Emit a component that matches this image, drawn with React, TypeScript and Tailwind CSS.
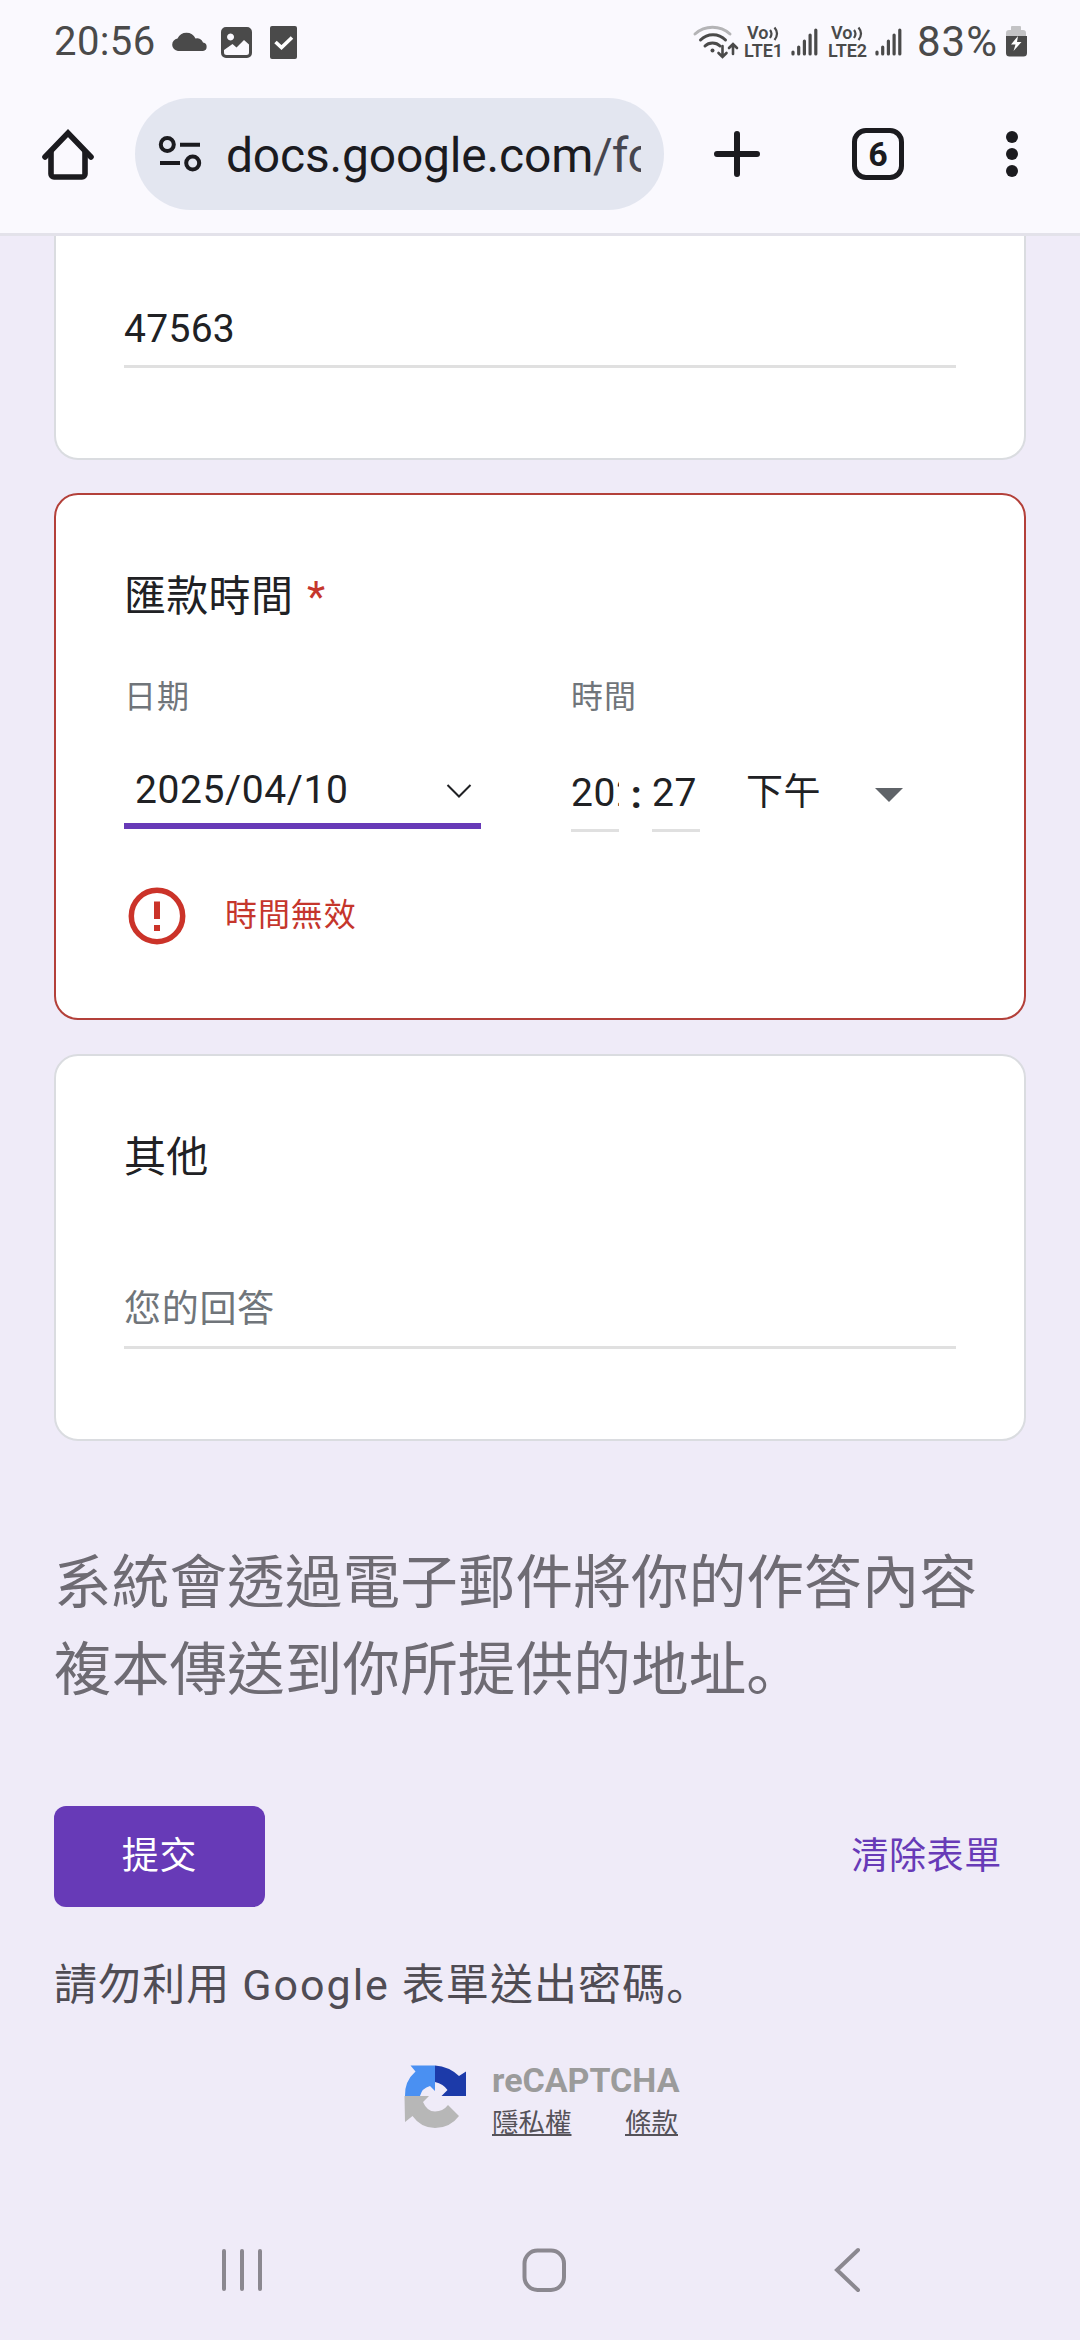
import type { ReactNode } from "react";

const cjk = "font-['Roboto','Noto_Sans_CJK_TC',sans-serif]";

function StatusBar() {
  return (
    <div className="flex h-[84px] items-center justify-between pl-[54px] pr-[53px] text-[#4a4a4a]">
      <div className="flex items-center">
        <span className="w-[118px] text-[40px] leading-none tracking-[0.4px]">20:56</span>
        <svg className="h-[34px] w-[126px]" viewBox="172 25 126 34" fill="#4a4a4a">
          <path d="M178 51a6.300 6.300 0 0 1-.5-12.500A10 10 0 0 1 195.500 38.500a6 6 0 0 1 7.500 4A4.300 4.300 0 0 1 203 51z" />
          <path
            fillRule="evenodd"
            d="M226 27h21a5 5 0 0 1 5 5v21a5 5 0 0 1-5 5h-21a5 5 0 0 1-5-5v-21a5 5 0 0 1 5-5zM230.500 33.500a3.500 3.500 0 1 0 .1 0zM224 50v2.500a2.500 2.500 0 0 0 2.500 2.500h20a2.500 2.500 0 0 0 2.500-2.500v-8l-5-4.500-7.500 7.500-4-3.500z"
          />
          <rect x="270" y="26" width="27" height="33" rx="2" />
          <path d="M275.500 42l6 5.500 10.500-10" fill="none" stroke="#fff" strokeWidth="3.600" />
        </svg>
      </div>
      <div className="flex items-center">
        <svg className="h-[34px] w-[48px]" viewBox="692 26 48 34" fill="none" stroke="#4a4a4a" strokeWidth="3" strokeLinecap="round">
          <path d="M695 35c10-9 25-9 35 0" stroke="#b4b4b6" />
          <path d="M700.500 41c7-7 18-7 25 0M705 47c4-4 11-4 15 0" />
          <circle cx="712.500" cy="51.500" r="2" fill="#4a4a4a" stroke="none" />
          <path d="M722.500 47v10M718.500 54l4 4 4-4M733 55V46M729 49l4-4 4 4" strokeWidth="2.600" />
        </svg>
        <LteBadge label="LTE1" />
        <Signal />
        <span className="w-[5px]" />
        <LteBadge label="LTE2" />
        <Signal />
        <span className="ml-[14px] w-[85px] whitespace-nowrap text-[42px] leading-none tracking-[1px]">83%</span>
        <svg className="ml-[3px] h-[34px] w-[22px]" viewBox="1005 26 22 34">
          <path d="M1006 38v-4a3 3 0 0 1 3-3h2v-3a1 1 0 0 1 1-1h8a1 1 0 0 1 1 1v3h2a3 3 0 0 1 3 3v4z" fill="#c3c3c5" />
          <path d="M1006 37h21v17a3.500 3.500 0 0 1-3.500 3.500h-14a3.500 3.500 0 0 1-3.500-3.500z" fill="#4a4a4a" />
          <path d="M1018 37l-7 8.500h4.500l-2 6.500 8-9h-4.500z" fill="#fff" />
        </svg>
      </div>
    </div>
  );
}

function LteBadge({ label }: { label: string }) {
  return (
    <div className="ml-[4px] flex w-[46px] flex-col whitespace-nowrap text-[18px] font-semibold leading-[18px]">
      <span className="flex items-center pl-[3px]">
        Vo
        <svg className="ml-px h-[15px] w-[10px]" viewBox="0 0 10 15" fill="none" stroke="#4a4a4a" strokeWidth="2.200">
          <path d="M1 4q3 3.500 0 8M5.500 1.500q5 6 0 12.500" />
        </svg>
      </span>
      <span>{label}</span>
    </div>
  );
}

function Signal() {
  return (
    <svg className="h-[30px] w-[29px]" viewBox="0 0 29 30" stroke="#4a4a4a" strokeWidth="3.200" strokeLinecap="round">
      <path d="M3 25v2M8.700 20v7M14.400 14v13M20.100 8v19M25.800 3v24" />
    </svg>
  );
}

function BrowserBar() {
  return (
    <div className="flex h-[152px] items-start border-b-[3px] border-[#e3e2ea] pt-[14px] text-[#1b1b1f]">
      <svg className="ml-[40px] mt-[28px] h-[56px] w-[56px]" viewBox="40 126 56 56" fill="none" stroke="#1b1b1f" strokeWidth="5.600" strokeLinecap="round">
        <path d="M45 157l23-24 23 24" strokeLinejoin="miter" />
        <path d="M51 152v22a3 3 0 0 0 3 3h28a3 3 0 0 0 3-3v-22" />
      </svg>
      <div className="ml-[39px] flex h-[112px] w-[529px] items-center rounded-full bg-[#e3e6f0] pl-[23px] pr-[23px]">
        <svg className="h-[40px] w-[46px] shrink-0" viewBox="158 134 46 40" fill="none" stroke="#1b1b1f" strokeWidth="4">
          <circle cx="167.300" cy="144.500" r="6.500" />
          <circle cx="192.700" cy="163" r="6.500" />
          <path d="M180 144.800h20M160 163h20" />
        </svg>
        <div className="ml-[22px] mt-[3px] w-[415px] overflow-hidden whitespace-nowrap text-[48px] leading-[60px] tracking-[-0.200px]">
          docs.google.com<span className="tracking-[-1px] text-[#46464f]">/fo</span>
        </div>
      </div>
      <svg className="ml-[49px] mt-[32px] h-[48px] w-[48px]" viewBox="0 0 48 48" stroke="#1b1b1f" strokeWidth="6" strokeLinecap="round">
        <path d="M24 4v40M4 24h40" />
      </svg>
      <div className="ml-[91px] mt-[30px] flex h-[52px] w-[52px] items-center justify-center rounded-[14px] border-[5.500px] border-[#1b1b1f] text-[34px] font-bold leading-none">
        6
      </div>
      <div className="ml-[102px] mt-[33px] flex flex-col gap-[5px]">
        <i className="size-3 rounded-full bg-[#1b1b1f]" />
        <i className="size-3 rounded-full bg-[#1b1b1f]" />
        <i className="size-3 rounded-full bg-[#1b1b1f]" />
      </div>
    </div>
  );
}

function Card({ className, children }: { className: string; children: ReactNode }) {
  return <section className={`mx-[54px] border-2 bg-white px-[68px] ${className}`}>{children}</section>;
}

function TransferTimeCard() {
  return (
    <Card className="mt-[33px] h-[527px] rounded-[24px] border-[#b3403a] pt-[71px]">
      <h2 className="text-[42px] leading-[62px] tracking-[0.3px]">
        匯款時間 <span className="ml-[3px] text-[#c5362c]">*</span>
      </h2>
      <div className="mt-[45px] flex">
        <div className="w-[447px]">
          <p className="text-[32px] leading-[48px] tracking-[0.9px] text-[#70757a]">日期</p>
          <div className="mt-[23px] flex h-[85px] w-[357px] items-center justify-between border-b-[6px] border-[#673ab7] pl-[11px] pr-[9px] pt-[14px] text-[39px] tracking-[0.6px]">
            2025/04/10
            <svg className="h-4 w-[26px]" viewBox="0 0 26 16" fill="none" stroke="#202124" strokeWidth="2">
              <path d="M1.500 2l11.500 11.500L24.500 2" />
            </svg>
          </div>
        </div>
        <div>
          <p className="text-[32px] leading-[48px] tracking-[0.9px] text-[#70757a]">時間</p>
          <div className="mt-[27px] flex h-[84px] items-center text-[39px] tracking-[0.6px]">
            <div className="h-full w-[48px] overflow-hidden border-b-[3px] border-[#e0e0e0] leading-[90px]">202</div>
            <span className="w-[33px] pl-[2px] pt-[10px] text-center font-bold">:</span>
            <div className="h-full w-[48px] border-b-[3px] border-[#e0e0e0] leading-[90px]">27</div>
            <span className="ml-[46px] pt-[6px] text-[37px]">下午</span>
            <svg className="ml-[54px] mt-[10px] h-[14px] w-[28px]" viewBox="0 0 28 14" fill="#5f6368">
              <path d="M0 0h28L14 14z" />
            </svg>
          </div>
        </div>
      </div>
      <div className="mt-[55px] flex items-center text-[#c5362c]">
        <svg className="ml-[4px] size-[58px]" viewBox="0 0 58 58" fill="none" stroke="#cb3329" strokeWidth="5.500">
          <circle cx="29" cy="29" r="25.700" />
          <path d="M29 14.500v17.500M29 38v6" strokeWidth="6" />
        </svg>
        <span className="mb-[3px] ml-[39px] text-[32px] tracking-[0.9px]">時間無效</span>
      </div>
    </Card>
  );
}

function RecaptchaLogo() {
  return (
    <svg className="h-[65px] w-[64px]" viewBox="0 0 64 65">
      <path d="M6.500 1.500H31V27l-5-5q-8 2-10 10H1A31 31 0 0 1 11.500 7.500z" fill="#4a90f2" />
      <path d="M31 1.500q14 1 24 10.500l7-4.500V32H37.500l6-6q-4-6-12.500-8z" fill="#1c3aa9" />
      <path d="M.5 32H25l-6 6q4 9.500 12 9.500 8 0 13-6.500l11 11q-9 12-24 12-14 0-22.500-12L1 58z" fill="#b7b7b7" />
    </svg>
  );
}

function NavBar() {
  return (
    <nav className="mt-[97px] flex pl-[221px]">
      <svg className="h-[46px] w-[642px]" viewBox="221 2250 642 46" fill="none" stroke="#8b8890" strokeWidth="4" strokeLinecap="round">
        <path d="M224 2254v38M242 2254v38M260 2254v38" />
        <rect x="524.500" y="2253.500" width="39.500" height="39.500" rx="13" />
        <path d="M858 2253l-21 20 21 20" />
      </svg>
    </nav>
  );
}

// Full stop that sits at the lower left of its box
function FullStop() {
  return <span className="font-['Noto_Sans_CJK_JP',sans-serif] leading-none">。</span>;
}

export default function App() {
  return (
    <div className={`h-[2340px] w-[1080px] overflow-hidden bg-[#efebf8] text-[#202124] ${cjk}`}>
      <header className="bg-[#faf9fe]">
        <StatusBar />
        <BrowserBar />
      </header>

      <main>
        <Card className="h-[224px] rounded-b-[24px] border-t-0 border-[#dadce0] pt-[59px]">
          <div className="h-[73px] border-b-[3px] border-[#e0e0e0] text-[39px] leading-[68px] tracking-[0.3px]">47563</div>
        </Card>

        <TransferTimeCard />

        <Card className="mt-[34px] h-[387px] rounded-[24px] border-[#dadce0] pt-[71px]">
          <h2 className="text-[42px] leading-[62px] tracking-[0.3px]">其他</h2>
          <div className="mt-[87px] h-[73px] border-b-[3px] border-[#e0e0e0] text-[37px] leading-[67px] tracking-[0.7px] text-[#70757a]">您的回答</div>
        </Card>

        <p className="ml-[54px] mt-[99px] text-[57.600px] leading-[87px] tracking-[0.1px] text-[#6e6b73]">
          系統會透過電子郵件將你的作答內容
          <br />
          複本傳送到你所提供的地址
          <FullStop />
        </p>

        <div className="mt-[92px] flex items-center justify-between pl-[54px] pr-[78px] text-[37px] tracking-[0.7px]">
          <button className="h-[101px] w-[211px] rounded-[12px] bg-[#673ab7] text-white">提交</button>
          <button className="text-[#673ab7]">清除表單</button>
        </div>

        <p className="ml-[54px] mt-[47px] text-[43px] leading-[62px] tracking-[1.100px] text-[#4f4c54]">
          請勿利用 <span className="tracking-[2px]">Google</span> 表單送出密碼
          <FullStop />
        </p>

        <div className="ml-[404px] mt-[48px] flex">
          <RecaptchaLogo />
          <div className="ml-[24px] w-[186px]">
            <p className="text-[34px] font-bold leading-[32px] text-[#9b9b9b]">reCAPTCHA</p>
            <div className="flex justify-between text-[26.500px] leading-[54px] text-[#555259] underline">
              <span>隱私權</span>
              <span>條款</span>
            </div>
          </div>
        </div>
      </main>

      <NavBar />
    </div>
  );
}
